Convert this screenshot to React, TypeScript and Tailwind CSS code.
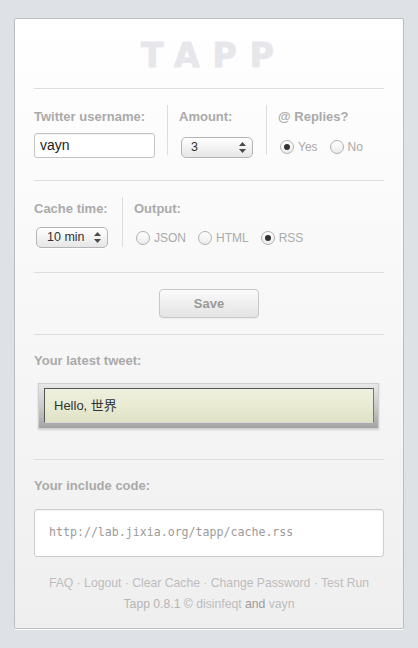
import React, { useState } from "react";

const SANS = "font-['Liberation_Sans',Arial,sans-serif]";

const Label = ({ children }: { children: React.ReactNode }) => (
  <div className="mt-[4px] text-[13px] font-bold leading-[16px] text-[#aaaaaa]">{children}</div>
);

const SelectArrows = () => (
  <svg width="7" height="11" viewBox="0 0 7 11" className="shrink-0">
    <path d="M3.5 0 L7 4 L0 4 Z" fill="#4a4a4a" />
    <path d="M0 7 L7 7 L3.5 11 Z" fill="#4a4a4a" />
  </svg>
);

const FakeSelect = ({ value, pl }: { value: string; pl: string }) => (
  <div
    className={`flex h-[21px] w-[72px] items-center justify-between rounded-[5px] border border-[#b4b4b4] bg-gradient-to-b from-white to-[#e6e6e6] pr-[6px] text-[12.5px] text-[#333] shadow-[0_1px_0_rgba(255,255,255,0.8)] ${pl}`}
  >
    <span>{value}</span>
    <SelectArrows />
  </div>
);

const Radio = ({ label, checked, onClick, first }: { label: string; checked: boolean; onClick: () => void; first?: boolean }) => (
  <button onClick={onClick} className={`flex items-center gap-[4px] ${first ? "ml-[2px]" : "ml-[12px]"}`}>
    <span className="flex h-[14px] w-[14px] items-center justify-center rounded-full border border-[#b0b0b0] bg-gradient-to-b from-white to-[#ececec]">
      {checked && <span className="h-[6px] w-[6px] rounded-full bg-[#333]" />}
    </span>
    <span className="text-[12px] text-[#aaaaaa]">{label}</span>
  </button>
);

export default function App() {
  const [replies, setReplies] = useState("yes");
  const [output, setOutput] = useState("rss");

  return (
    <div className={`min-h-screen bg-[#dee2e7] px-[14px] pt-[18px] ${SANS}`}>
      <div className="rounded-[2px] border border-[#bdbdbd] bg-gradient-to-b from-white to-[#efefef] px-[19px] pb-[13px] pt-[17px] shadow-[0_1px_0_#ffffff]">
        {/* Logo */}
        <h1 className="pl-[10px] text-center font-['DejaVu_Sans',sans-serif] text-[33px] font-bold leading-[40px] tracking-[13px] text-[#e7e7eb] [-webkit-text-stroke:1px_#e7e7eb]">
          TAPP
        </h1>

        {/* Row 1 */}
        <div className="mt-[12px] flex border-t border-[#dddddd] pb-[25px] pt-[16px]">
          <div className="h-[50px] w-[133px]">
            <Label>Twitter username:</Label>
            <div className="mt-[8px] flex h-[25px] w-[121px] items-center rounded-[3px] border border-[#c4c4c4] bg-white pl-[5px] text-[14px] text-[#222] shadow-[inset_0_1px_1px_rgba(0,0,0,0.06)]">
              vayn
            </div>
          </div>
          <div className="h-[50px] w-[99px] border-l border-[#dddddd] pl-[11px]">
            <Label>Amount:</Label>
            <div className="mt-[8px] flex h-[25px] items-center pl-[2px] pt-[3px]">
              <FakeSelect value="3" pl="pl-[9px]" />
            </div>
          </div>
          <div className="h-[50px] flex-1 border-l border-[#dddddd] pl-[11px]">
            <Label>@ Replies?</Label>
            <div className="mt-[8px] flex h-[25px] items-center pt-[3px]">
              <Radio first label="Yes" checked={replies === "yes"} onClick={() => setReplies("yes")} />
              <Radio label="No" checked={replies === "no"} onClick={() => setReplies("no")} />
            </div>
          </div>
        </div>

        {/* Row 2 */}
        <div className="flex border-t border-[#dddddd] pb-[25px] pt-[16px]">
          <div className="h-[50px] w-[88px]">
            <Label>Cache time:</Label>
            <div className="mt-[8px] flex h-[25px] items-center pl-[2px]">
              <FakeSelect value="10 min" pl="pl-[10px]" />
            </div>
          </div>
          <div className="h-[50px] flex-1 border-l border-[#dddddd] pl-[11px]">
            <Label>Output:</Label>
            <div className="mt-[8px] flex h-[25px] items-center">
              <Radio first label="JSON" checked={output === "json"} onClick={() => setOutput("json")} />
              <Radio label="HTML" checked={output === "html"} onClick={() => setOutput("html")} />
              <Radio label="RSS" checked={output === "rss"} onClick={() => setOutput("rss")} />
            </div>
          </div>
        </div>

        {/* Save */}
        <div className="flex justify-center border-t border-[#dddddd] pb-[16px] pt-[16px]">
          <button className="h-[29px] w-[100px] rounded-[4px] border border-[#c8c8c8] bg-gradient-to-b from-[#fbfbfb] to-[#e3e3e3] text-[13px] font-bold text-[#9a9a9a] shadow-[0_1px_1px_rgba(0,0,0,0.05)]">
            Save
          </button>
        </div>

        {/* Latest tweet */}
        <div className="border-t border-[#dddddd] pb-[30px] pt-[14px]">
          <Label>Your latest tweet:</Label>
          <div className="ml-[4px] mt-[14px] h-[46px] w-[341px] border border-[#cfcfcf] bg-gradient-to-b from-[#e8e8e8] via-[#cbcbcb] to-[#a4a4a4] pb-[6px] pl-[5px] pr-[4px] pt-[4px] shadow-[0_1px_2px_rgba(0,0,0,0.15)]">
            <div className="flex h-[35px] items-center border border-b-[#d8d8d8] border-l-[#555] border-r-[#777] border-t-[#555] bg-gradient-to-b from-[#eef0dd] via-[#e9ebd3] to-[#dfe2c6] pl-[9px] text-[13px] text-[#333]">
              <span className="font-['Liberation_Sans','Noto_Sans_CJK_SC',sans-serif]">Hello, 世界</span>
            </div>
          </div>
        </div>

        {/* Include code */}
        <div className="border-t border-[#dddddd] pt-[14px]">
          <Label>Your include code:</Label>
          <div className="mt-[15px] flex h-[48px] items-center rounded-[3px] border border-[#cccccc] bg-white pl-[14px] font-['DejaVu_Sans_Mono',monospace] text-[11.6px] text-[#9a9a9a] shadow-[inset_0_1px_1px_rgba(0,0,0,0.05)]">
            http://lab.jixia.org/tapp/cache.rss
          </div>
        </div>

        {/* Footer */}
        <div className="mt-[16px] text-center text-[12.2px] leading-[21px] text-[#bdbdbd]">
          <div>FAQ · Logout · Clear Cache · Change Password · Test Run</div>
          <div>
            <span className="text-[#b5b5b5]">Tapp 0.8.1 ©</span> disinfeqt <span className="text-[#9c9c9c]">and</span> vayn
          </div>
        </div>
      </div>
    </div>
  );
}
